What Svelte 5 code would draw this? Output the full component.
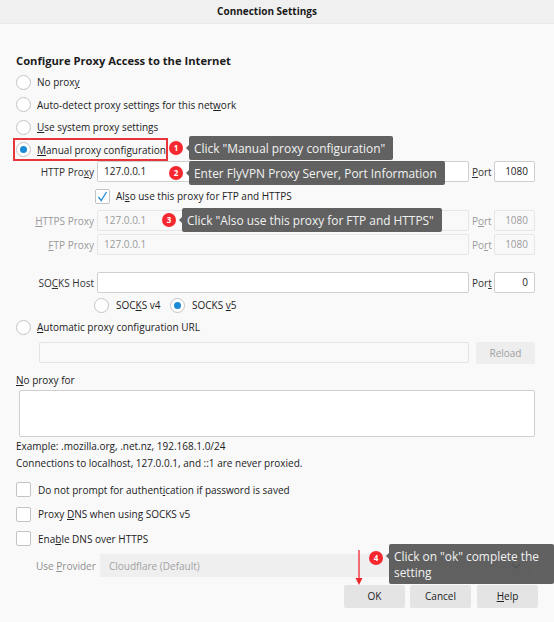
<script>
  const tips = [
    { n: 1, text: 'Click "Manual proxy configuration"', cls: 'tip1' },
    { n: 2, text: 'Enter FlyVPN Proxy Server, Port Information', cls: 'tip2' },
    { n: 3, text: 'Click "Also use this proxy for FTP and HTTPS"', cls: 'tip3' },
    { n: 4, text: 'Click on "ok" complete the setting', cls: 'tip4' }
  ];
</script>

<div class="dialog">
  <div class="titlebar">Connection Settings</div>

  <div class="content">
    <h1>Configure Proxy Access to the Internet</h1>

    <div class="radio-row"><span class="radio"></span><span>No prox<u>y</u></span></div>
    <div class="radio-row"><span class="radio"></span><span>Auto-detect proxy settings for this net<u>w</u>ork</span></div>
    <div class="radio-row"><span class="radio"></span><span><u>U</u>se system proxy settings</span></div>
    <div class="radio-row"><span class="radio on"></span><span><u>M</u>anual proxy configuration</span></div>

    <div class="proxy-row first">
      <span class="lbl">HTTP Pro<u>x</u>y</span>
      <span class="input">127.0.0.1</span>
      <span class="port-lbl"><u>P</u>ort</span>
      <span class="input port">1080</span>
    </div>
    <div class="also-row"><span class="check checked">
      <svg width="13" height="13" viewBox="0 0 13 13"><path d="M2.5 7 L5.2 10.5 L10.5 2" fill="none" stroke="#2b8fd8" stroke-width="1.4"/></svg>
    </span><span>Al<u>s</u>o use this proxy for FTP and HTTPS</span></div>
    <div class="proxy-row dim https">
      <span class="lbl"><u>H</u>TTPS Proxy</span>
      <span class="input">127.0.0.1</span>
      <span class="port-lbl">P<u>o</u>rt</span>
      <span class="input port">1080</span>
    </div>
    <div class="proxy-row dim ftp">
      <span class="lbl"><u>F</u>TP Proxy</span>
      <span class="input">127.0.0.1</span>
      <span class="port-lbl">Po<u>r</u>t</span>
      <span class="input port">1080</span>
    </div>
    <div class="proxy-row socks">
      <span class="lbl">SO<u>C</u>KS Host</span>
      <span class="input"></span>
      <span class="port-lbl">Por<u>t</u></span>
      <span class="input port">0</span>
    </div>
    <div class="socks-ver">
      <span class="radio"></span><span class="v4">SOC<u>K</u>S v4</span>
      <span class="radio on"></span><span>SOCKS <u>v</u>5</span>
    </div>

    <div class="radio-row auto"><span class="radio"></span><span><u>A</u>utomatic proxy configuration URL</span></div>
    <div class="url-row">
      <span class="input"></span>
      <span class="btn reload">Reload</span>
    </div>

    <div class="noproxy-lbl"><u>N</u>o proxy for</div>
    <div class="textarea"></div>
    <div class="hint ex">Example: .mozilla.org, .net.nz, 192.168.1.0/24</div>
    <div class="hint conn">Connections to localhost, 127.0.0.1, and ::1 are never proxied.</div>

    <div class="check-row c1"><span class="check"></span><span>Do not prompt for authent<u>i</u>cation if password is saved</span></div>
    <div class="check-row c2"><span class="check"></span><span>Proxy <u>D</u>NS when using SOCKS v5</span></div>
    <div class="check-row c3"><span class="check"></span><span>Ena<u>b</u>le DNS over HTTPS</span></div>

    <div class="provider-row">
      <span class="prov-lbl">Use <u>P</u>rovider</span>
      <span class="select">Cloudflare (Default)
        <svg width="10" height="6" viewBox="0 0 10 6"><path d="M1 1 L5 5 L9 1" fill="none" stroke="#222" stroke-width="1.2"/></svg>
      </span>
    </div>

    <div class="buttons">
      <span class="btn">OK</span>
      <span class="btn">Cancel</span>
      <span class="btn help"><u>H</u>elp</span>
    </div>
  </div>

  <!-- annotations drawn over the screenshot -->
  <div class="redbox"></div>
  {#each tips as t}
    <div class="note {t.cls}">
      <span class="badge">{t.n}</span>
      <span class="tip">{t.text}</span>
    </div>
  {/each}
  <svg class="arrow" width="10" height="36" viewBox="0 0 10 36">
    <path d="M5 0 V30" stroke="#f0282d" stroke-width="1.3"/>
    <path d="M1.5 28 L8.5 28 L5 35 Z" fill="#f0282d"/>
  </svg>
</div>

<style>
  :global(body) {
    margin: 0;
    background: #fafafa;
  }
  .dialog {
    position: relative;
    width: 554px;
    height: 622px;
    overflow: hidden;
    background: #f9f9fa;
    color: #222;
    font-family: "Open Sans", "Noto Sans", sans-serif;
    font-size: 10px;
  }
  u {
    text-underline-offset: 1px;
  }
  .titlebar {
    height: 23px;
    line-height: 22px;
    padding-right: 20px;
    background: #f0f0f0;
    border-bottom: 1px solid #e8e8e8;
    text-align: center;
    font-weight: 700;
    font-size: 10px;
    color: #1a1a1a;
  }
  .content {
    padding: 0 19px 0 16px;
  }
  h1 {
    margin: 30px 0 0;
    height: 14px;
    line-height: 14px;
    font-size: 11.2px;
    font-weight: 700;
    color: #1c1c1c;
  }
  .radio-row {
    display: flex;
    align-items: center;
    gap: 6px;
    height: 22.5px;
  }
  .radio-row:first-of-type {
    margin-top: 3px;
  }
  .radio {
    box-sizing: border-box;
    display: flex;
    align-items: center;
    justify-content: center;
    width: 15px;
    height: 15px;
    flex: none;
    border: 1px solid #c4c4c6;
    border-radius: 50%;
    background: #fff;
  }
  .radio.on::after {
    content: "";
    width: 7px;
    height: 7px;
    border-radius: 50%;
    background: #1a8ad6;
  }
  .proxy-row {
    display: flex;
    align-items: center;
    height: 21px;
  }
  .proxy-row.https {
    margin-top: 6px;
  }
  .proxy-row.ftp {
    margin-top: 3px;
  }
  .proxy-row.socks {
    margin-top: 17px;
  }
  .lbl {
    width: 78px;
    margin-right: 3px;
    text-align: right;
    flex: none;
    color: #333;
  }
  .input {
    box-sizing: border-box;
    display: block;
    width: 372px;
    height: 21px;
    line-height: 19px;
    padding: 0 6px;
    flex: none;
    border: 1px solid #cfcfd1;
    border-radius: 2px;
    background: #fff;
    color: #222;
  }
  .input.port {
    width: 41px;
    text-align: right;
  }
  .port-lbl {
    width: 22px;
    margin-left: 3px;
    flex: none;
    color: #333;
  }
  .dim .lbl,
  .dim .port-lbl {
    color: #9a9a9a;
  }
  .dim .input {
    background: #f9f9fa;
    border-color: #e6e6e7;
    color: #9a9a9a;
  }
  .also-row {
    display: flex;
    align-items: center;
    gap: 6px;
    height: 16px;
    margin: 6px 0 0 79px;
  }
  .check {
    box-sizing: border-box;
    display: block;
    width: 15px;
    height: 15px;
    flex: none;
    border: 1px solid #c4c4c6;
    border-radius: 2px;
    background: #fff;
  }
  .check.checked svg {
    display: block;
  }
  .socks-ver {
    display: flex;
    align-items: center;
    height: 16px;
    margin: 4px 0 0 78px;
  }
  .socks-ver .radio {
    margin-right: 7px;
  }
  .v4 {
    width: 54px;
    white-space: nowrap;
    flex: none;
  }
  .radio-row.auto {
    margin-top: 3px;
    height: 22px;
  }
  .url-row {
    display: flex;
    gap: 7px;
    margin: 4px 0 0 23px;
  }
  .url-row .input {
    width: 430px;
    background: #f9f9fa;
    border-color: #e3e3e4;
  }
  .btn {
    box-sizing: border-box;
    display: block;
    width: 61px;
    height: 23px;
    line-height: 23px;
    text-align: center;
    background: #e4e4e5;
    border-radius: 2px;
    color: #222;
  }
  .btn.reload {
    width: 59px;
    height: 22px;
    line-height: 22px;
    background: #eeeeef;
    color: #a0a0a0;
  }
  .noproxy-lbl {
    height: 14px;
    line-height: 14px;
    margin-top: 9px;
  }
  .textarea {
    box-sizing: border-box;
    height: 47px;
    margin: 3px 0 0 3px;
    width: 516px;
    background: #fff;
    border: 1px solid #cfcfd1;
    border-radius: 2px;
  }
  .hint {
    height: 14px;
    line-height: 14px;
  }
  .hint.ex {
    margin-top: 2px;
  }
  .hint.conn {
    margin-top: 3px;
  }
  .check-row {
    display: flex;
    align-items: center;
    gap: 7px;
    height: 15px;
  }
  .c1 {
    margin-top: 12px;
  }
  .c2,
  .c3 {
    margin-top: 9.5px;
  }
  .provider-row {
    display: flex;
    align-items: center;
    margin: 8px 0 0 20px;
  }
  .prov-lbl {
    width: 64px;
    flex: none;
    color: #8e8e8e;
  }
  .select {
    box-sizing: border-box;
    display: flex;
    align-items: center;
    justify-content: space-between;
    width: 432px;
    height: 23px;
    padding: 0 11px 0 9px;
    background: #efeff0;
    color: #a2a2a2;
  }
  .buttons {
    display: flex;
    justify-content: flex-end;
    gap: 5px;
    width: 522px;
    margin-top: 8px;
  }
  .btn.help {
    margin-left: 1px;
  }
  .redbox {
    position: absolute;
    left: 13px;
    top: 138px;
    width: 151px;
    height: 19px;
    border: 2px solid #e8353a;
  }
  .note {
    position: absolute;
    display: flex;
    align-items: center;
  }
  .badge {
    width: 14px;
    height: 14px;
    flex: none;
    border-radius: 50%;
    background: #f5282f;
    color: #fff;
    font-size: 8px;
    font-weight: 700;
    line-height: 14px;
    text-align: center;
  }
  .tip {
    position: relative;
    box-sizing: border-box;
    margin-left: 6px;
    padding: 0 8px 0 5px;
    background: rgba(84, 84, 84, 0.92);
    color: #f2f2f2;
    border-radius: 2px;
    font-size: 11.9px;
    line-height: 24px;
    white-space: nowrap;
  }
  .tip::before {
    content: "";
    position: absolute;
    left: -3px;
    top: 50%;
    margin-top: -3px;
    border-style: solid;
    border-width: 3px 3px 3px 0;
    border-color: transparent #616161 transparent transparent;
  }
  .tip1 {
    left: 169px;
    top: 136px;
  }
  .tip2 {
    left: 169px;
    top: 161px;
  }
  .tip3 {
    left: 162px;
    top: 208px;
  }
  .tip4 {
    left: 369px;
    top: 544px;
    width: 185px;
  }
  .tip4 .badge {
    margin-top: -12px;
  }
  .tip4 .tip {
    width: 165px;
    line-height: 16px;
    padding: 4px 5px;
    white-space: normal;
  }
  .tip4 .tip::before {
    top: 12px;
  }
  .arrow {
    position: absolute;
    left: 354px;
    top: 550px;
  }
</style>
